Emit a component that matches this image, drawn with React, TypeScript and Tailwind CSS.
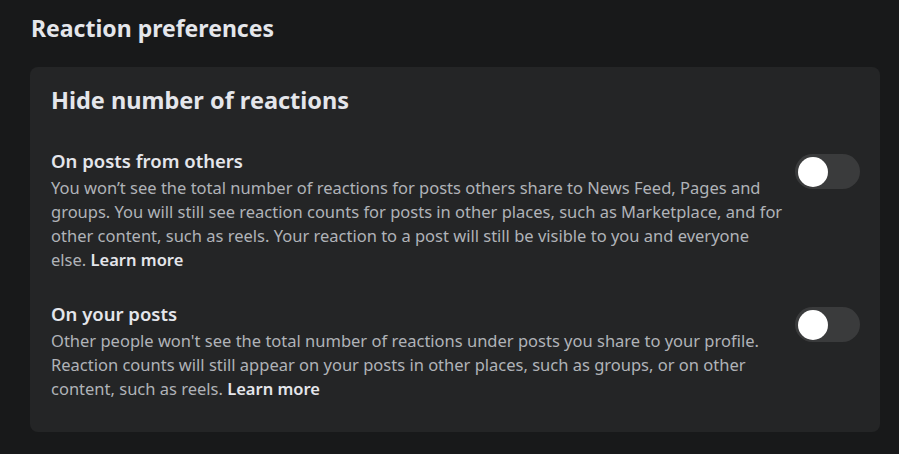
import React from "react"

function Toggle() {
  return (
    <div className="mt-[4px] h-[35px] w-[65px] shrink-0 rounded-full bg-[#3a3b3c] p-[3px] flex items-center">
      <div className="h-[30px] w-[30px] rounded-full bg-white" />
    </div>
  )
}

function Row({ title, children }: { title: string; children: React.ReactNode }) {
  return (
    <div className="flex items-start justify-between">
      <div className="w-[737px]">
        <div className="text-[18.5px] leading-[22px] font-semibold text-[#e4e6eb]">{title}</div>
        <p className="mt-[4px] text-[16.5px] leading-[24px] text-[#b0b3b8]">{children}</p>
      </div>
      <Toggle />
    </div>
  )
}

export default function App() {
  return (
    <div
      className="min-h-screen w-[899px] h-[454px] bg-[#18191a] px-[30px] pt-[16px]"
      style={{ fontFamily: '"Noto Sans", "Open Sans", sans-serif' }}
    >
      <h1 className="pl-[1px] text-[23px] leading-[24px] font-bold text-[#e4e6eb]">Reaction preferences</h1>

      <div className="mt-[27px] w-[850px] rounded-lg bg-[#242526] pl-[21px] pr-[20px] pt-[19px] pb-[31px]">
        <h2 className="text-[23.5px] leading-[28px] font-bold text-[#e4e6eb]">Hide number of reactions</h2>

        <div className="mt-[36px]">
          <Row title="On posts from others">
            You won’t see the total number of reactions for posts others share to News Feed, Pages and groups. You will
            still see reaction counts for posts in other places, such as Marketplace, and for other content, such as reels.
            Your reaction to a post will still be visible to you and everyone else.{" "}
            <span className="font-semibold text-[#e4e6eb]">Learn more</span>
          </Row>
        </div>

        <div className="mt-[31px]">
          <Row title="On your posts">
            Other people won't see the total number of reactions under posts you share to your profile. Reaction counts will
            still appear on your posts in other places, such as groups, or on other content, such as reels.{" "}
            <span className="font-semibold text-[#e4e6eb]">Learn more</span>
          </Row>
        </div>
      </div>
    </div>
  )
}
